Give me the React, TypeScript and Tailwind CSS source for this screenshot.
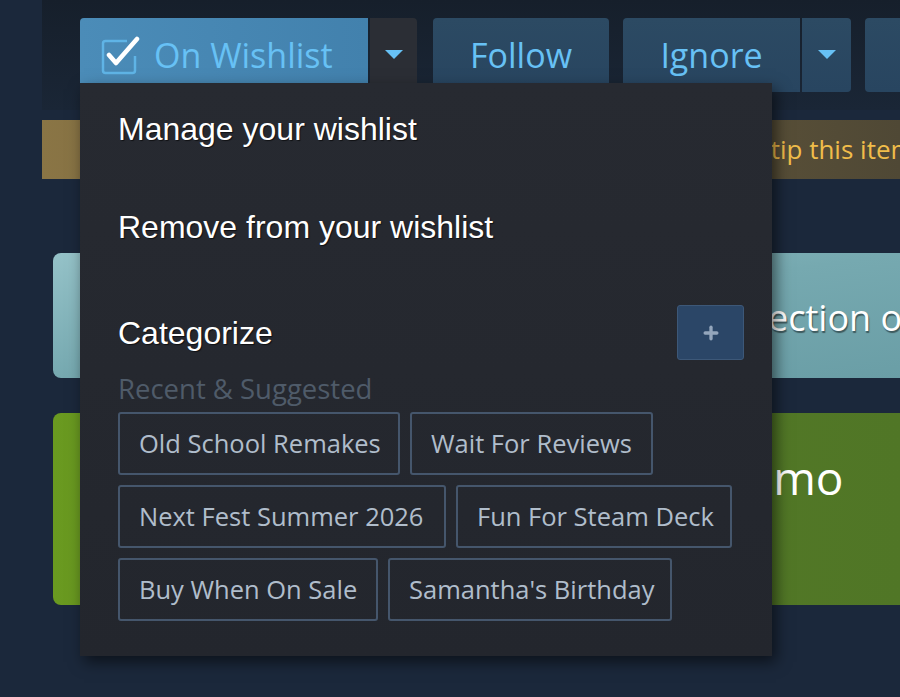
import { Plus } from 'lucide-react';

const tags = [
  { label: 'Old School Remakes', w: 'w-[282px]' },
  { label: 'Wait For Reviews', w: 'w-[243px]' },
  { label: 'Next Fest Summer 2026', w: 'w-[328px]' },
  { label: 'Fun For Steam Deck', w: 'w-[276px]' },
  { label: 'Buy When On Sale', w: 'w-[260px]' },
  { label: "Samantha's Birthday", w: 'w-[284px]' },
];

const Caret = () => (
  <svg width="18" height="9" viewBox="0 0 18 9">
    <path d="M0 0 H18 L9 9 Z" fill="#67c1f5" />
  </svg>
);

const CheckBox = () => (
  <svg width="40" height="40" viewBox="0 0 40 40" className="shrink-0">
    <path
      d="M27 6 H5.5 a2.5 2.5 0 0 0 -2.5 2.5 V35.5 a2.5 2.5 0 0 0 2.5 2.5 H32.5 a2.5 2.5 0 0 0 2.5 -2.5 V21"
      fill="none"
      stroke="#67c1f5"
      strokeOpacity="0.75"
      strokeWidth="2.5"
    />
    <path d="M9 20 L16 28 L37 4" fill="none" stroke="#ffffff" strokeWidth="4.5" strokeLinecap="round" strokeLinejoin="round" />
  </svg>
);

const menuText = "font-['Liberation_Sans',Arial,sans-serif] text-[32px] leading-[34px] text-white [text-shadow:1px_1px_1px_rgba(0,0,0,0.6)]";

export default function App() {
  return (
    <div className="relative w-[900px] h-[697px] overflow-hidden bg-[#1b283b] font-['Open_Sans',sans-serif]">
      {/* page header strip */}
      <div className="ml-[42px] h-[110px] bg-gradient-to-b from-[#161f2b] to-[#1a2636] pt-[18px] pl-[38px] overflow-hidden">
        <div className="flex">
          <div className="flex gap-[2px] shrink-0">
            <div className="w-[288px] h-[74px] rounded-l-[4px] bg-gradient-to-r from-[#4b8cb8] to-[#4281ad] flex items-center pl-[20px] gap-[14px]">
              <CheckBox />
              <span className="text-[34px] text-[#67c1f5]">On Wishlist</span>
            </div>
            <div className="w-[47px] h-[74px] rounded-r-[4px] bg-[#2b2e35] flex items-start justify-center pt-[32px]">
              <Caret />
            </div>
          </div>
          <div className="shrink-0 ml-[16px] w-[176px] h-[74px] rounded-[4px] bg-gradient-to-b from-[#2c4a63] to-[#284560] flex items-center justify-center text-[34px] text-[#67c1f5]">
            Follow
          </div>
          <div className="shrink-0 ml-[14px] flex gap-[2px]">
            <div className="w-[177px] h-[74px] rounded-l-[4px] bg-gradient-to-b from-[#2c4a63] to-[#284560] flex items-center justify-center text-[34px] text-[#67c1f5]">
              Ignore
            </div>
            <div className="w-[49px] h-[74px] rounded-r-[4px] bg-gradient-to-b from-[#2c4a63] to-[#284560] flex items-start justify-center pt-[32px]">
              <Caret />
            </div>
          </div>
          <div className="shrink-0 ml-[14px] w-[80px] h-[74px] rounded-[4px] bg-gradient-to-b from-[#2c4a63] to-[#284560]" />
        </div>
      </div>

      {/* tip banner */}
      <div className="ml-[42px] mt-[10px] h-[59px] bg-gradient-to-r from-[#8a7545] via-[#6b5d3c] to-[#4f4835] flex items-center pl-[697px] whitespace-nowrap text-[26px] text-[#f0bd4a]">
        to tip this item
      </div>

      {/* collection card */}
      <div className="ml-[53px] mt-[74px] h-[125px] rounded-l-[8px] bg-gradient-to-br from-[#95c2c8] via-[#76a9b0] to-[#6a9ea6] flex items-center pl-[715px] pt-[4px] whitespace-nowrap text-[36px] text-white [text-shadow:1px_2px_1px_rgba(0,0,0,0.45)]">
        ection of
      </div>

      {/* demo card */}
      <div className="ml-[53px] mt-[35px] h-[192px] rounded-l-[8px] bg-gradient-to-r from-[#6a9a20] via-[#557a27] to-[#507626] flex items-start pt-[30px] pl-[661px] whitespace-nowrap text-[46px] text-white">
        Demo
      </div>

      {/* dropdown menu */}
      <div className="absolute left-[80px] top-[83px] w-[692px] h-[573px] bg-gradient-to-b from-[#272a31] to-[#23262d] shadow-[4px_6px_14px_rgba(0,0,0,0.55)] pl-[38px] pr-[28px]">
        <div className={`pt-[29px] ${menuText}`}>Manage your wishlist</div>
        <div className={`mt-[64px] ${menuText}`}>Remove from your wishlist</div>
        <div className="mt-[61px] flex items-center justify-between">
          <span className={menuText}>Categorize</span>
          <div className="w-[67px] h-[55px] rounded-[3px] bg-[#2b4667] border border-[#3d5878] flex items-center justify-center">
            <Plus size={20} strokeWidth={4} color="#94a6bc" />
          </div>
        </div>
        <div className="mt-[14px] text-[27.5px] leading-[30px] text-[#4f5b69]">Recent &amp; Suggested</div>
        <div className="mt-[8px] flex flex-wrap gap-x-[10px] gap-y-[10px] w-[630px]">
          {tags.map((t) => (
            <div
              key={t.label}
              className={`${t.w} h-[63px] rounded-[3px] border-2 border-[#45566c] flex items-center pl-[19px] whitespace-nowrap text-[25.5px] text-[#b0bdcb]`}
            >
              {t.label}
            </div>
          ))}
        </div>
      </div>
    </div>
  );
}
